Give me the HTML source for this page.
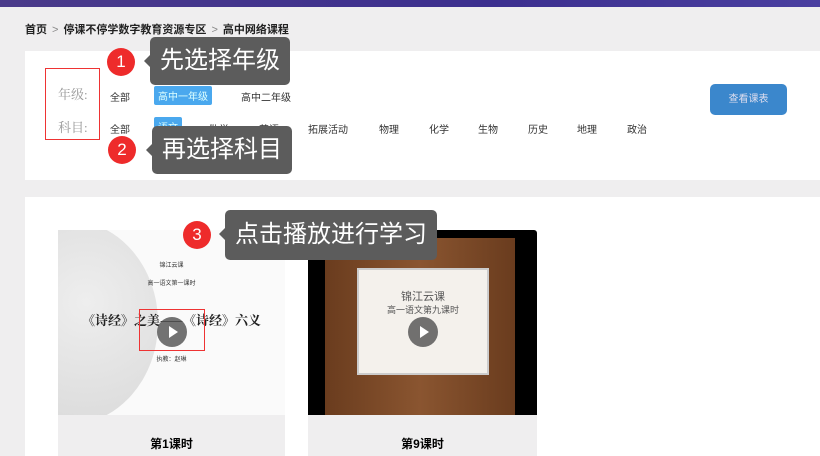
<!DOCTYPE html>
<html><head><meta charset="utf-8"><style>
*{margin:0;padding:0;box-sizing:border-box}
body{width:820px;height:456px;overflow:hidden;background:#efeeef;font-family:"Liberation Sans","Noto Sans CJK SC",sans-serif;position:relative}
.a{position:absolute}
.top{left:0;top:0;width:820px;height:7px;background:linear-gradient(90deg,#4a3a8a,#3c2f8f 60%,#4a3fa0)}
.crumb{left:25px;top:21px;font-size:11px;font-weight:bold;color:#222}
.crumb span{color:#888;font-weight:normal;margin:0 5px}
.p1{left:25px;top:51px;width:795px;height:129px;background:#fff}
.p2{left:25px;top:197px;width:795px;height:259px;background:#fff}
.lbl{font-family:"Liberation Serif","Noto Serif CJK SC",serif;font-size:13px;color:#999}
.it{font-size:10px;color:#333}
.sel{background:#4aa8ee;color:#dff;padding:2px 4px;border-radius:2px}
.tip{background:#5c5c5c;color:#fff;border-radius:5px;font-size:24px;padding:0 10px;line-height:48px;white-space:nowrap}
.tip:before{content:"";position:absolute;left:-6px;top:18px;border:6px solid transparent;border-left:0;border-right-color:#5c5c5c}
.num{width:28px;height:28px;border-radius:50%;background:#ee2b2b;color:#fff;font-size:17px;text-align:center;line-height:28px}
.play{width:30px;height:30px;border-radius:50%;background:rgba(80,80,80,.8)}
.play:after{content:"";position:absolute;left:12px;top:9px;border-left:9px solid #fff;border-top:6px solid transparent;border-bottom:6px solid transparent}
</style></head><body>
<div class="a top"></div>
<div class="a crumb">首页<span>&gt;</span>停课不停学数字教育资源专区<span>&gt;</span>高中网络课程</div>
<div class="a p1"></div>
<div class="a" style="left:45px;top:68px;width:55px;height:72px;border:1px solid #e33"></div>
<div class="a lbl" style="left:58px;top:84px">年级:</div>
<div class="a lbl" style="left:58px;top:117px">科目:</div>
<div class="a it" style="left:110px;top:89px">全部</div>
<div class="a it sel" style="left:154px;top:86px">高中一年级</div>
<div class="a it" style="left:241px;top:89px">高中二年级</div>
<div class="a it" style="left:110px;top:121px">全部</div>
<div class="a it sel" style="left:154px;top:117px">语文</div>
<div class="a it" style="left:209px;top:121px">数学</div>
<div class="a it" style="left:259px;top:121px">英语</div>
<div class="a it" style="left:308px;top:121px">拓展活动</div>
<div class="a it" style="left:379px;top:121px">物理</div>
<div class="a it" style="left:429px;top:121px">化学</div>
<div class="a it" style="left:478px;top:121px">生物</div>
<div class="a it" style="left:528px;top:121px">历史</div>
<div class="a it" style="left:577px;top:121px">地理</div>
<div class="a it" style="left:627px;top:121px">政治</div>
<div class="a" style="left:710px;top:84px;width:77px;height:31px;background:#3b87cc;border-radius:5px;color:#dde;font-size:10px;text-align:center;line-height:31px">查看课表</div>
<div class="a p2"></div>
<div class="a" style="left:58px;top:230px;width:227px;height:185px;background:#fafafa;overflow:hidden">
 <div class="a" style="left:-80px;top:-10px;width:180px;height:205px;border-radius:50%;background:radial-gradient(circle at 60% 40%,#eee,#d6d6d6)"></div>
 <div class="a" style="left:0;top:30px;width:227px;text-align:center;font-size:6px;color:#333">锦江云课</div>
 <div class="a" style="left:0;top:48px;width:227px;text-align:center;font-size:6px;color:#333">高一语文第一课时</div>
 <div class="a" style="left:0;top:80px;width:227px;text-align:center;font-size:13px;font-weight:bold;color:#222;font-family:'Noto Serif CJK SC',serif">《诗经》之美——《诗经》六义</div>
 <div class="a" style="left:0;top:124px;width:227px;text-align:center;font-size:6px;color:#333">执教：赵琳</div>
 <div class="a play" style="left:99px;top:87px"></div>
</div>
<div class="a" style="left:139px;top:309px;width:66px;height:42px;border:1.5px solid #e33"></div>
<div class="a" style="left:58px;top:415px;width:227px;height:41px;background:#efeeef;text-align:center;font-size:12px;font-weight:bold;padding-top:20px">第1课时</div>
<div class="a" style="left:308px;top:230px;width:229px;height:185px;background:#000;border-radius:3px 3px 0 0;overflow:hidden">
 <div class="a" style="left:17px;top:8px;width:190px;height:177px;background:linear-gradient(90deg,#6a3c1e,#8a5530,#6a3c1e)"></div>
 <div class="a" style="left:49px;top:38px;width:132px;height:107px;background:#f4f1ec;border:2px solid #ccc"></div>
 <div class="a" style="left:49px;top:58px;width:132px;text-align:center;font-size:11px;color:#555">锦江云课</div>
 <div class="a" style="left:49px;top:73px;width:132px;text-align:center;font-size:9px;color:#555">高一语文第九课时</div>
 <div class="a play" style="left:100px;top:87px"></div>
</div>
<div class="a" style="left:308px;top:415px;width:229px;height:41px;background:#efeeef;text-align:center;font-size:12px;font-weight:bold;padding-top:20px">第9课时</div>
<div class="a tip" style="left:150px;top:37px">先选择年级</div>
<div class="a num" style="left:107px;top:48px">1</div>
<div class="a tip" style="left:152px;top:126px">再选择科目</div>
<div class="a num" style="left:108px;top:136px">2</div>
<div class="a tip" style="left:225px;top:210px;height:50px;line-height:50px">点击播放进行学习</div>
<div class="a num" style="left:183px;top:221px">3</div>
</body></html>
